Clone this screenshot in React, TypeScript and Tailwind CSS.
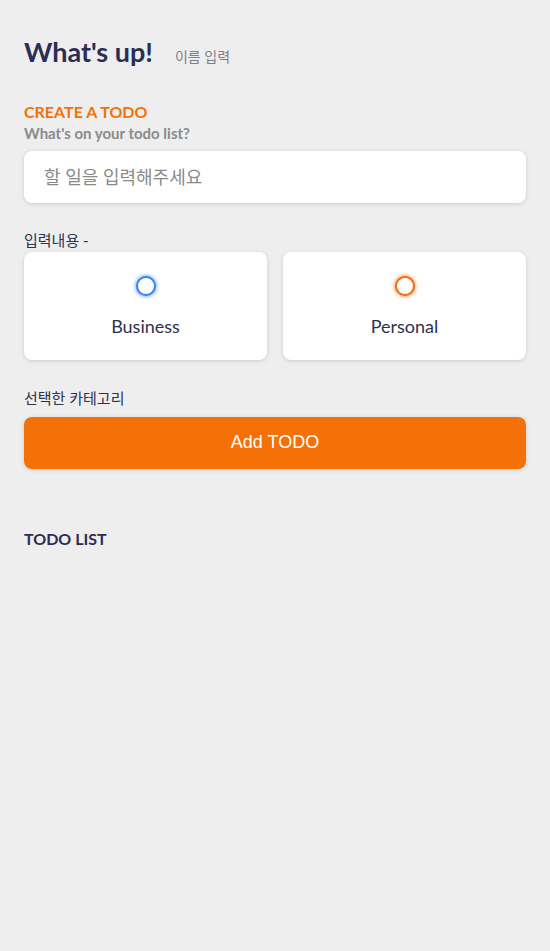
import { FC } from "react";

const CategoryCard: FC<{ label: string; ring: string }> = ({ label, ring }) => (
  <label className="flex h-[108px] flex-col items-center justify-start rounded-lg bg-white pt-[24px] shadow-[0_1px_4px_rgba(0,0,0,0.15)]">
    <span className={`h-5 w-5 rounded-full border-2 bg-white ${ring}`} />
    <span className="mt-[17px] text-[18px] text-[#2f3150]">{label}</span>
  </label>
);

export default function App() {
  return (
    <div className="min-h-[951px] bg-[#eeeeee] px-6 pt-[32px] text-[#2f3150] font-['Lato','Noto_Sans_CJK_KR',sans-serif]">
      {/* Greeting */}
      <div className="flex items-baseline gap-[22px]">
        <h1 className="text-[27px] font-bold text-[#2b2d52]">What's up!</h1>
        <span className="text-[14px] text-[#7d7f8c]">이름 입력</span>
      </div>

      {/* Create */}
      <section className="mt-[29px]">
        <h3 className="text-[16px] font-bold leading-5 text-[#f37106]">CREATE A TODO</h3>
        <h4 className="text-[15px] font-bold leading-[22px] text-[#8b8b8b]">What's on your todo list?</h4>
        <input
          className="mt-[7px] h-[52px] w-full rounded-lg bg-white px-5 text-[18px] shadow-[0_1px_4px_rgba(0,0,0,0.15)] outline-none placeholder:text-[#8a8a8a]"
          placeholder="할 일을 입력해주세요"
        />

        <p className="mt-[27px] text-[15px] leading-5">입력내용 -</p>
        <div className="mt-[2px] grid grid-cols-2 gap-4">
          <CategoryCard label="Business" ring="border-[#3a82f7] shadow-[0_0_4px_#3a82f7]" />
          <CategoryCard label="Personal" ring="border-[#f36d10] shadow-[0_0_4px_#f36d10]" />
        </div>

        <p className="mt-[28px] text-[15px] leading-5">선택한 카테고리</p>
        <button className="mt-[9px] h-[52px] w-full rounded-lg bg-[#f37106] text-[18px] text-white shadow-[0_1px_4px_rgba(0,0,0,0.15)] font-['Liberation_Sans',Arial,sans-serif]">
          Add TODO
        </button>
      </section>

      {/* List */}
      <section className="mt-[58px]">
        <h3 className="text-[16px] font-bold text-[#2b2d52]">TODO LIST</h3>
      </section>
    </div>
  );
}
